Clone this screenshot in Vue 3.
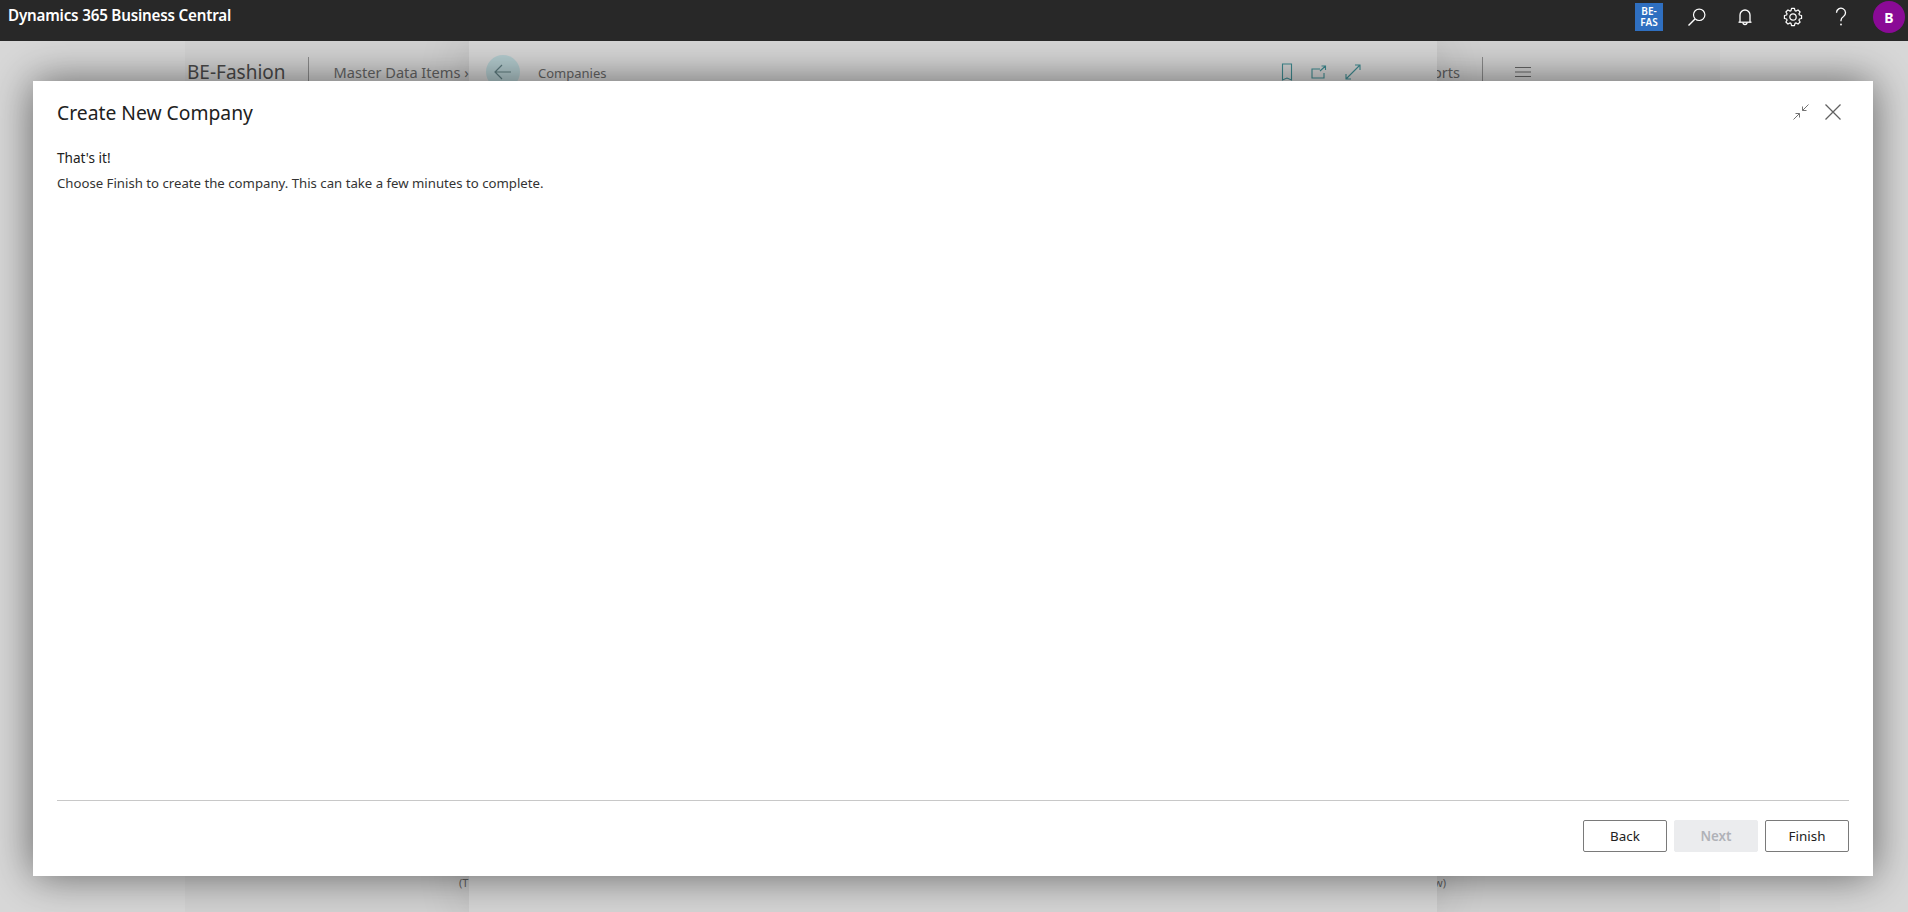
<script setup>
const buttons = [
  { label: 'Back', disabled: false },
  { label: 'Next', disabled: true },
  { label: 'Finish', disabled: false },
]

// Eight-tooth cog outline for the settings icon, centred on (10, 10).
const gearPath = Array.from({ length: 8 }, (_, i) => {
  const step = Math.PI / 4
  const a = i * step
  const pt = (r, t) => `${(10 + r * Math.cos(t)).toFixed(2)} ${(10 + r * Math.sin(t)).toFixed(2)}`
  return `${i === 0 ? 'M' : 'L'}${pt(6.7, a - 0.3)}L${pt(8.7, a - 0.17)}L${pt(8.7, a + 0.17)}L${pt(6.7, a + 0.3)}`
}).join('') + 'Z'
</script>

<template>
  <div class="page">
    <header class="topbar">
      <div class="brand">Dynamics 365 Business Central</div>
      <div class="tools">
        <div class="tile">BE-<br />FAS</div>
        <button class="tool" aria-label="Search">
          <svg width="20" height="20" viewBox="0 0 20 20" fill="none" stroke="#fff" stroke-width="1.2">
            <circle cx="12.2" cy="7.8" r="5.7" />
            <path d="M8 12 1.500 18.500" stroke-width="1.500" />
          </svg>
        </button>
        <button class="tool" aria-label="Notifications">
          <svg width="20" height="20" viewBox="0 0 20 20" fill="none" stroke="#fff" stroke-width="1.300">
            <path d="M5 15V8a5 5 0 0 1 10 0v7" />
            <path d="M3.500 15.200h13" />
            <path d="M8 15.500a2 2 0 0 0 4 0" />
          </svg>
        </button>
        <button class="tool" aria-label="Settings">
          <svg width="20" height="20" viewBox="0 0 20 20" fill="none" stroke="#fff" stroke-width="1.200" stroke-linejoin="round">
            <circle cx="10" cy="10" r="3.200" />
            <path :d="gearPath" />
          </svg>
        </button>
        <button class="tool" aria-label="Help">
          <svg width="20" height="20" viewBox="0 0 20 20" fill="none" stroke="#fff" stroke-width="1.300">
            <path d="M5.500 5.800a4.500 4.500 0 1 1 7 3.700c-1.600 1-2.500 1.800-2.500 3.700v1" />
            <circle cx="10" cy="17.500" r=".9" fill="#fff" stroke="none" />
          </svg>
        </button>
        <div class="avatar">B</div>
      </div>
    </header>

    <main class="stage">
      <div class="backdrop">
        <div class="side-panel">
          <div class="side-nav">
            <span class="company">BE-Fashion</span>
            <span class="vline"></span>
            <span class="nav-item">Master Data Items ›</span>
            <span class="nav-spacer"></span>
            <span class="nav-item">Reports</span>
            <span class="vline"></span>
            <svg class="burger" width="18" height="12" viewBox="0 0 18 12" stroke="#666" fill="none">
              <path d="M1 1.500h16M1 6h16M1 10.500h16" />
            </svg>
          </div>
          <div class="side-foot"><span>(T</span><span>w)</span></div>
          <div class="center-panel">
            <div class="center-head">
              <span class="back-circle">
                <svg width="18" height="16" viewBox="0 0 18 16" fill="none" stroke="#5e7c80" stroke-width="1.200">
                  <path d="M17 8H1M8 1 1 8l7 7" />
                </svg>
              </span>
              <span class="center-title">Companies</span>
              <span class="nav-spacer"></span>
              <svg width="12" height="18" viewBox="0 0 12 18" fill="none" stroke="#3f8b91" stroke-width="1.100">
                <path d="M1.500 1h9v16L6 15l-4.500 2z" />
              </svg>
              <svg width="16" height="14" viewBox="0 0 16 14" fill="none" stroke="#3f8b91" stroke-width="1.100">
                <path d="M9 4H1v9h12V8M9 6l5.500-5M10.500 1h4v4" />
              </svg>
              <svg width="16" height="16" viewBox="0 0 16 16" fill="none" stroke="#3f8b91" stroke-width="1.100">
                <path d="M1 15 15 1M10 1h5v5M1 10v5h5" />
              </svg>
            </div>
          </div>
        </div>
      </div>

      <section class="modal">
        <div class="modal-head">
          <h1>Create New Company</h1>
          <div class="modal-actions">
            <svg width="16" height="16" viewBox="0 0 16 16" fill="none" stroke="#737373" stroke-width="1">
              <path d="M15.500.5 9.500 6.500M9.500 2.500v4h4M.5 15.500l6-6M2.500 9.500h4v4" />
            </svg>
            <svg width="16" height="16" viewBox="0 0 16 16" fill="none" stroke="#616161" stroke-width="1.300">
              <path d="M.5.500l15 15M15.500.5l-15 15" />
            </svg>
          </div>
        </div>
        <div class="modal-body">
          <p class="strong">That's it!</p>
          <p>Choose Finish to create the company. This can take a few minutes to complete.</p>
        </div>
        <footer class="modal-foot">
          <button
            v-for="b in buttons"
            :key="b.label"
            class="action"
            :class="{ disabled: b.disabled }"
          >{{ b.label }}</button>
        </footer>
      </section>
    </main>
  </div>
</template>

<style scoped>
.page {
  width: 1908px;
  height: 912px;
  display: flex;
  flex-direction: column;
  overflow: hidden;
  font-family: "Noto Sans", "Open Sans", sans-serif;
}
.topbar {
  height: 41px;
  background: #282828;
  display: flex;
  align-items: flex-start;
  justify-content: space-between;
  flex: none;
  position: relative;
  z-index: 2;
}
.brand {
  color: #fff;
  font-size: 15.2px;
  font-weight: 600;
  line-height: 31px;
  padding-left: 8px;
  letter-spacing: -0.2px;
}
.tools {
  display: flex;
  align-items: center;
  height: 34px;
  padding-right: 3px;
}
.tile {
  width: 28px;
  height: 28px;
  background: #2f6fc0;
  color: #fff;
  font-size: 10px;
  font-weight: 600;
  line-height: 11px;
  text-align: center;
  padding-top: 3px;
  box-sizing: border-box;
  margin-right: 10px;
}
.tool {
  width: 48px;
  height: 34px;
  background: none;
  border: 0;
  padding: 0;
  display: flex;
  align-items: center;
  justify-content: center;
}
.avatar {
  width: 32px;
  height: 32px;
  margin-left: 8px;
  border-radius: 50%;
  background: #8a0a96;
  color: #fff;
  font-size: 14px;
  font-weight: 700;
  display: flex;
  align-items: center;
  justify-content: center;
}
.stage {
  position: relative;
  flex: 1;
  min-height: 0;
}
.backdrop {
  height: 100%;
  background: #d8d8d8;
  padding: 0 188px 0 185px;
  box-sizing: border-box;
}
.side-panel {
  position: relative;
  height: 100%;
  background: #d3d3d3;
  display: flex;
  flex-direction: column;
  justify-content: space-between;
  overflow: hidden;
}
.side-nav {
  display: flex;
  align-items: center;
  gap: 22px;
  height: 36px;
  margin-top: 13px;
  padding: 0 188px 0 2px;
  color: #666;
}
.company {
  font-size: 19px;
  color: #4a4a4a;
}
.vline {
  width: 1px;
  height: 30px;
  background: #8c8c8c;
  margin-right: 3px;
}
.burger {
  margin-left: 6px;
}
.nav-item {
  font-size: 14.6px;
}
.nav-spacer {
  flex: 1;
}
.side-foot {
  display: flex;
  justify-content: space-between;
  font-size: 11px;
  color: #666;
  line-height: 16px;
  margin-bottom: 21px;
  padding: 0 274px;
}
.center-panel {
  position: absolute;
  top: 0;
  bottom: 0;
  left: 284px;
  right: 283px;
  background: #d6d6d6;
  box-shadow: 0 0 50px rgba(0, 0, 0, 0.14);
}
.center-head {
  display: flex;
  align-items: center;
  gap: 18px;
  height: 36px;
  margin-top: 13px;
  padding: 0 76px 0 17px;
}
.back-circle {
  width: 34px;
  height: 34px;
  border-radius: 50%;
  background: #b4cccf;
  display: flex;
  align-items: center;
  justify-content: center;
}
.center-title {
  font-size: 13px;
  color: #666;
  padding-top: 2px;
}
.modal {
  position: absolute;
  top: 40px;
  left: 33px;
  right: 35px;
  bottom: 36px;
  background: #fff;
  box-shadow: 0 0 40px rgba(0, 0, 0, 0.55);
  display: flex;
  flex-direction: column;
  padding: 0 24px;
  color: #212121;
}
.modal-head {
  display: flex;
  align-items: center;
  justify-content: space-between;
  height: 64px;
  flex: none;
}
.modal-head h1 {
  margin: 0 0 2px;
  font-size: 19.3px;
  font-weight: 400;
  letter-spacing: 0;
}
.modal-actions {
  display: flex;
  align-items: center;
  gap: 16px;
  padding-right: 8px;
  padding-bottom: 2px;
}
.modal-body {
  flex: 1;
  font-size: 13.2px;
  padding-top: 4px;
}
.modal-body p {
  margin: 0;
  line-height: 18px;
  color: #333;
}
.modal-body .strong {
  margin-bottom: 7px;
  font-size: 13.6px;
  color: #212121;
}
.modal-foot {
  flex: none;
  height: 76px;
  border-top: 1px solid #c8c8c8;
  display: flex;
  justify-content: flex-end;
  gap: 7px;
  padding-top: 19px;
  box-sizing: border-box;
}
.action {
  width: 84px;
  height: 32px;
  background: #fff;
  border: 1px solid #7a7a7a;
  border-radius: 2px;
  color: #212121;
  font-family: inherit;
  font-size: 13.4px;
  padding: 0;
}
.action.disabled {
  background: #ebecee;
  border-color: #ebecee;
  color: #b0b2b8;
  font-weight: 600;
}
</style>
